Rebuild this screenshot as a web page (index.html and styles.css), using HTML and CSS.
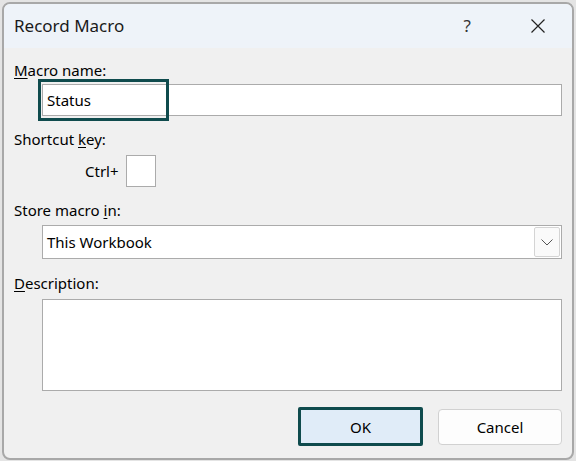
FILE: index.html
```html
<!DOCTYPE html>
<html lang="en">

<head>
    <meta charset="UTF-8">
    <meta name="viewport" content="width=device-width, initial-scale=1.0">
    <title>Record Macro</title>
    <link rel="stylesheet" href="styles.css">
</head>

<body>
    <div class="dialog">
        <!-- Title bar -->
        <div class="titlebar">
            <span class="title">Record Macro</span>
            <span class="help">?</span>
            <span class="close">
                <svg width="14" height="14" viewBox="0 0 14 14">
                    <path d="M0.5 0.5 L13.5 13.5 M13.5 0.5 L0.5 13.5" stroke="#222" stroke-width="1.2" fill="none" />
                </svg>
            </span>
        </div>

        <div class="content">
            <!-- Macro name -->
            <div class="field-label label-first"><u>M</u>acro name:</div>
            <div class="input-wrap">
                <div class="textbox">Status</div>
                <div class="focus-ring"></div>
            </div>

            <!-- Shortcut key -->
            <div class="field-label">Shortcut <u>k</u>ey:</div>
            <div class="shortcut-row">
                <span class="ctrl">Ctrl+</span>
                <div class="key-box"></div>
            </div>

            <!-- Store macro in -->
            <div class="field-label">Store macro <u>i</u>n:</div>
            <div class="select">
                <span class="select-value">This Workbook</span>
                <span class="select-button">
                    <svg width="12" height="7" viewBox="0 0 12 7">
                        <polyline points="0.5,0.5 6,6 11.5,0.5" stroke="#555" stroke-width="1" fill="none" />
                    </svg>
                </span>
            </div>

            <!-- Description -->
            <div class="field-label label-desc"><u>D</u>escription:</div>
            <div class="textarea"></div>

            <!-- Buttons -->
            <div class="button-row">
                <button class="btn btn-ok">OK</button>
                <button class="btn btn-cancel">Cancel</button>
            </div>
        </div>
    </div>
</body>

</html>
```

FILE: styles.css
```css
/* General Body Styling */
body {
    font-family: "Segoe UI", "Noto Sans", sans-serif;
    background-color: #e4e4e4;
    margin: 0;
    width: 576px;
    height: 461px;
    overflow: hidden;
}

.dialog {
    box-sizing: border-box;
    width: 572px;
    height: 458px;
    margin: 2px 0 0 2px;
    border: 2px solid #a8a8a8;
    border-radius: 8px;
    background-color: #f0f0f0;
    overflow: hidden;
    display: flex;
    flex-direction: column;
}

/* Title bar */
.titlebar {
    height: 44px;
    flex-shrink: 0;
    background-color: #eef3f9;
    display: flex;
    align-items: center;
    padding: 0 0 0 10px;
}

.title {
    font-size: 17px;
    line-height: 24px;
    color: #1a1a1a;
    flex: 1;
}

.help {
    font-size: 17px;
    line-height: 24px;
    color: #333;
    margin-right: 60px;
}

.close {
    display: flex;
    margin-right: 27px;
}

/* Form */
.content {
    padding: 12px 10px 0 10px;
    flex: 1;
}

.field-label {
    font-size: 15px;
    line-height: 20px;
    color: #000;
    margin-top: 13px;
}

.field-label.label-first {
    margin-top: 0;
}

.field-label.label-desc {
    margin-top: 14px;
}

.field-label u {
    text-underline-offset: 2px;
}

.input-wrap {
    position: relative;
    margin: 4px 0 0 28px;
}

.textbox {
    box-sizing: border-box;
    height: 32px;
    border: 1px solid #ababab;
    background-color: #fff;
    font-size: 15px;
    line-height: 30px;
    padding-left: 4px;
    color: #000;
}

.focus-ring {
    position: absolute;
    left: -4px;
    top: -5px;
    width: 131px;
    height: 42px;
    box-sizing: border-box;
    border: 3px solid #0f4b4d;
}

.shortcut-row {
    display: flex;
    align-items: center;
    margin: 6px 0 0 71px;
}

.ctrl {
    font-size: 15px;
    margin-right: 7px;
}

.key-box {
    box-sizing: border-box;
    width: 30px;
    height: 32px;
    border: 1px solid #ababab;
    background-color: #fff;
}

.select {
    box-sizing: border-box;
    height: 34px;
    margin: 5px 0 0 28px;
    border: 1px solid #ababab;
    background-color: #fff;
    display: flex;
    align-items: center;
    padding: 0 1px 0 4px;
}

.select-value {
    flex: 1;
    font-size: 15px;
    color: #000;
}

.select-button {
    box-sizing: border-box;
    width: 26px;
    height: 30px;
    border: 1px solid #d4d4d4;
    border-radius: 2px;
    background-color: #fafafa;
    display: flex;
    align-items: center;
    justify-content: center;
}

.textarea {
    box-sizing: border-box;
    height: 92px;
    margin: 6px 0 0 28px;
    border: 1px solid #ababab;
    background-color: #fff;
}

.button-row {
    display: flex;
    justify-content: flex-end;
    align-items: center;
    gap: 15px;
    margin-top: 16px;
}

.btn {
    box-sizing: border-box;
    font-family: "Segoe UI", "Noto Sans", sans-serif;
    font-size: 15px;
    color: #000;
    padding: 0;
}

.btn-ok {
    width: 125px;
    height: 39px;
    border: 3px solid #0f4b4d;
    border-radius: 2px;
    background-color: #e0ecf8;
}

.btn-cancel {
    width: 124px;
    height: 36px;
    border: 1px solid #d1d1d1;
    border-radius: 4px;
    background-color: #fdfdfd;
}
```
